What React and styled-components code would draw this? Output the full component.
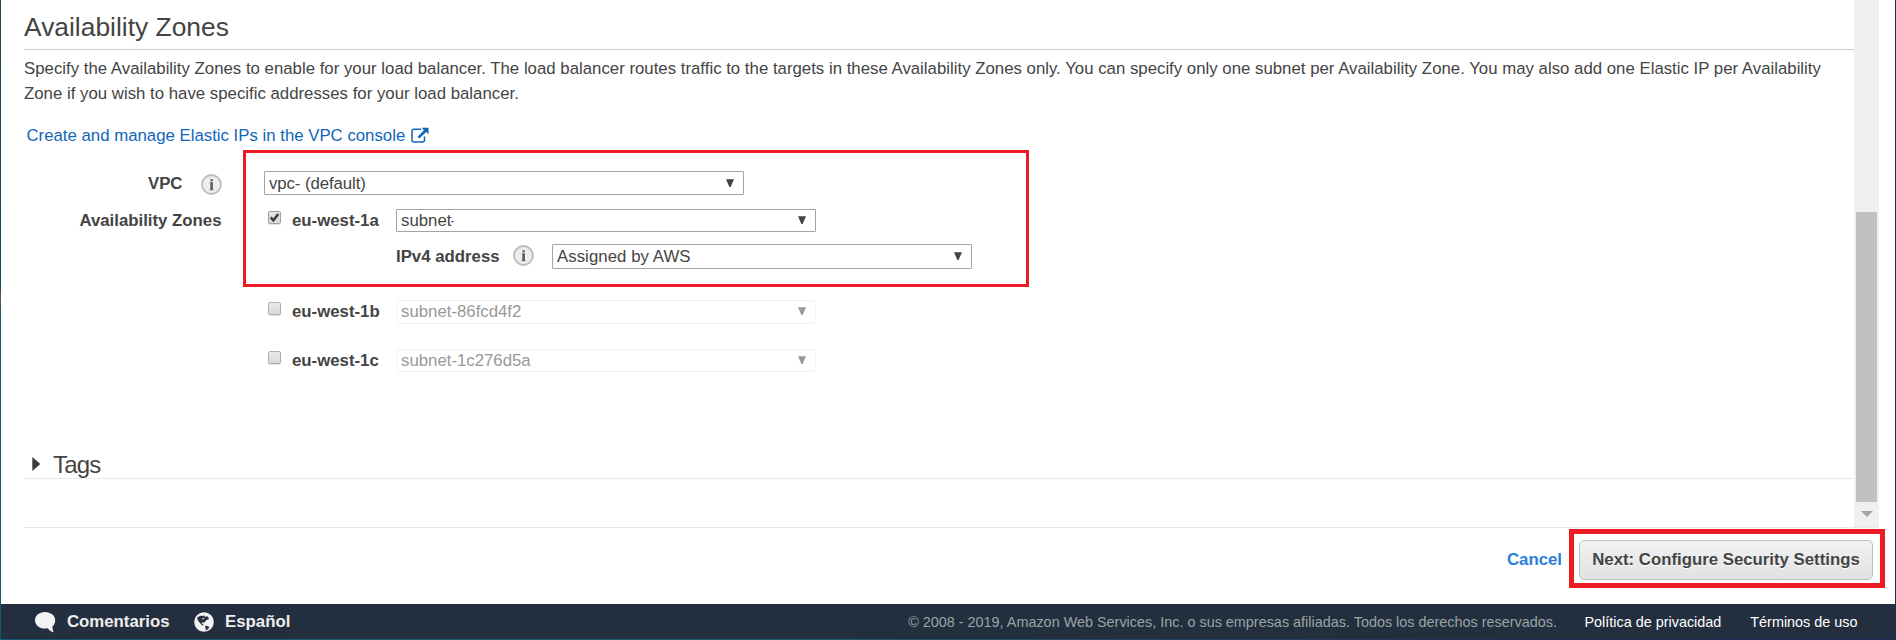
import React from "react";
import styled, { createGlobalStyle, css } from "styled-components";

const GlobalStyle = createGlobalStyle`
  * { box-sizing: border-box; }
  body {
    margin: 0;
    background: #fff;
    color: #444;
    font-family: "Liberation Sans", Arial, Helvetica, sans-serif;
    font-size: 16.8px;
    line-height: 19px;
  }
`;

const Page = styled.div`
  display: flex;
  height: 640px;
  overflow: hidden;
`;

const LeftEdge = styled.div`
  width: 1px;
  background: linear-gradient(#24485a, #1f4a60 45%, #5a5a5e 46%, #1b566f 50%, #17586f);
`;

const RightEdge = styled.div`
  width: 1px;
  background: #1e2b4f;
`;

const Window = styled.div`
  flex: 1;
  min-width: 0;
  display: flex;
  flex-direction: column;
`;

const Viewport = styled.div`
  display: flex;
  height: 527px;
  padding-right: 16px;
`;

const Content = styled.main`
  flex: 1;
  min-width: 0;
  padding-left: 23px;
`;

const Heading = styled.h2`
  margin: 0;
  padding: 12px 0 7px;
  border-bottom: 1px solid #ccc;
  font-size: 26.4px;
  font-weight: 400;
  line-height: 30px;
`;

const Description = styled.p`
  margin: 6px 0 0;
  line-height: 25px;
  letter-spacing: 0.007px;
`;

const ConsoleLink = styled.a`
  display: flex;
  align-items: flex-start;
  gap: 6px;
  height: 25px;
  margin-top: 17px;
  padding: 3px 0 0 2.5px;
  color: #1166bb;

  svg { margin-top: 1px; }
`;

const Form = styled.div`
  position: relative;
  height: 303px;
  padding-top: 23px;
`;

const Highlight = styled.div`
  position: absolute;
  top: 2px;
  left: 219px;
  width: 786px;
  height: 137px;
  border: 3px solid #ed1c24;
  pointer-events: none;
`;

const Row = styled.div`
  display: flex;
  align-items: flex-start;
  height: ${(p) => p.$height}px;
  margin-bottom: ${(p) => p.$gap || 0}px;
`;

const FieldLabel = styled.div`
  display: flex;
  justify-content: flex-end;
  width: 197.5px;
  font-weight: 700;
  gap: 18px;
`;

const LabelText = styled.span`
  padding-top: ${(p) => p.$top}px;
`;

const FieldBody = styled.div`
  display: flex;
  align-items: flex-start;
  margin-left: ${(p) => p.$indent}px;
`;

const Select = styled.div`
  display: flex;
  justify-content: space-between;
  align-items: flex-start;
  width: ${(p) => p.$width}px;
  height: ${(p) => p.$height}px;
  padding: ${(p) => p.$top - 1}px 9px 0 4px;
  border: 1px solid #a3a3a3;
  border-radius: 1px;
  background: #fff;
  ${(p) =>
    p.$disabled &&
    css`
      border-color: #f2f2f2;
      color: #999;
    `}
`;

const SelectValue = styled.span`
  white-space: nowrap;
  letter-spacing: ${(p) => p.$tracking || 0}px;
`;

const ShortDash = styled.span`
  display: inline-block;
  transform: scaleX(0.5);
  transform-origin: left center;
`;

const ArrowIcon = styled.svg`
  display: block;
  margin-top: 5px;
`;

const CheckBox = styled.span`
  display: block;
  width: 13px;
  height: 13px;
  margin-top: ${(p) => p.$top}px;
  border: 1px solid ${(p) => (p.$checked ? "#a0a0a0" : "#b0b0b0")};
  border-radius: 2px;
  background: linear-gradient(#e9e9e9, #dadada);
  box-shadow: 0 1px 1px rgba(0, 0, 0, 0.12);

  svg { display: block; }
`;

const ZoneName = styled.span`
  width: 104px;
  margin-left: 11px;
  padding-top: ${(p) => p.$top}px;
  font-weight: 700;
`;

const SubLabel = styled.span`
  width: 116.5px;
  padding-top: 3px;
  font-weight: 700;
`;

const InfoMark = styled.svg`
  display: block;
  flex: none;
  margin-top: ${(p) => p.$top}px;
`;

const TagsHeader = styled.div`
  display: flex;
  align-items: flex-start;
  gap: 13px;
  height: 28px;
  padding-left: 8px;
  border-bottom: 1px solid #e9e9e9;
  font-size: 24px;
  line-height: 27px;
  letter-spacing: -0.8px;

  svg { display: block; margin-top: 6px; }
`;

const ScrollTrack = styled.div`
  display: flex;
  flex-direction: column;
  align-items: center;
  width: 25px;
  padding-top: 212px;
  background: #f0f0f0;
`;

const ScrollThumb = styled.div`
  width: 21px;
  height: 290px;
  margin-bottom: 9px;
  background: #c1c1c1;
`;

const Actions = styled.div`
  display: flex;
  justify-content: flex-end;
  align-items: flex-start;
  gap: 17px;
  height: 77px;
  margin: 0 16px 0 23px;
  padding: 12px 6px 0 0;
  border-top: 1px solid #e9e9e9;
`;

const Cancel = styled.a`
  padding-top: 10px;
  color: #2a80d8;
  font-weight: 700;
`;

const NextButton = styled.button`
  position: relative;
  width: 294px;
  height: 40px;
  padding: 0 0 2px;
  border: 1px solid #c0c0c0;
  border-radius: 5px;
  background: linear-gradient(#f3f3f3, #e1e1e1);
  color: #444;
  font: 700 16.8px/19px "Liberation Sans", Arial, sans-serif;
  white-space: nowrap;
  text-shadow: 0 1px 0 #fff;

  &::after {
    content: "";
    position: absolute;
    inset: -12px -13px -9px -11px;
    border: 5px solid #ed1c24;
  }
`;

const Footer = styled.footer`
  display: flex;
  height: 35px;
  padding: 0 37.5px 0 34px;
  background: #232f3e;
  color: #eee;
  font-weight: 700;
  line-height: 35px;
`;

const FooterItem = styled.span`
  display: flex;
  align-items: flex-start;
  width: ${(p) => p.$width}px;
  gap: ${(p) => p.$gap}px;

  svg { display: block; margin-top: 8px; }
`;

const Legal = styled.div`
  display: flex;
  gap: 29px;
  margin-left: auto;
  font-size: 14.4px;
  font-weight: 400;
  line-height: 36px;
  white-space: nowrap;
`;

const Copyright = styled.span`
  margin-right: -1.5px;
  color: #99a5a6;
  letter-spacing: 0.005px;
`;

const LegalLink = styled.a`
  color: #fff;
`;

const BottomEdge = styled.div`
  height: 1px;
  background: linear-gradient(90deg, #17586f, #1d5f70 40%, #24335c 75%, #1e2f5c);
`;

const Arrow = () => (
  <ArrowIcon width="8" height="8" viewBox="0 0 8 8">
    <path d="M0 .2h8L4.6 8H3.4z" fill="currentColor" />
  </ArrowIcon>
);

const Info = ({ top }) => (
  <InfoMark $top={top} width="21" height="21" viewBox="0 0 21 21">
    <circle cx="10.5" cy="10.5" r="9.5" fill="#ededed" stroke="#bcbcbc" strokeWidth="1.8" />
    <path d="M8.3 8.2h3.7v7h1.100v1.300H8v-1.300h1.200V9.500h-.9z" fill="#bdbdbd" />
    <path d="M9.500 5.300h2.300v1.900H9.500zM9.500 8.300h2.300v7.700H9.500z" fill="#555" />
  </InfoMark>
);

const Check = () => (
  <svg width="11" height="11" viewBox="0 0 11 11">
    <path d="M1.700 5.400l2.700 2.900L9.300 2" fill="none" stroke="#3c3c3c" strokeWidth="2.500" />
  </svg>
);

const Zone = ({ name, subnet, height, checked }) => (
  <FieldBody $indent={checked ? 46.5 : 244}>
    <CheckBox $top={2} $checked={checked}>{checked && <Check />}</CheckBox>
    <ZoneName $top={2}>{name}</ZoneName>
    <Select $width={420} $height={height} $top={2} $disabled={!checked}>
      <SelectValue>{subnet}</SelectValue>
      <Arrow />
    </Select>
  </FieldBody>
);

export default function App() {
  return (
    <>
      <GlobalStyle />
      <Page>
        <LeftEdge />
        <Window>
          <Viewport>
            <Content>
              <Heading>Availability Zones</Heading>
              <Description>
                Specify the Availability Zones to enable for your load balancer. The load balancer routes traffic to the
                targets in these Availability Zones only. You can specify only one subnet per Availability Zone. You may
                also add one Elastic IP per Availability
                <br />
                Zone if you wish to have specific addresses for your load balancer.
              </Description>
              <ConsoleLink>
                Create and manage Elastic IPs in the VPC console
                <svg width="18" height="16" viewBox="0 0 18 16">
                  <path d="M10 2.300H3a2 2 0 0 0-2 2V13a2 2 0 0 0 2 2h8.500a2 2 0 0 0 2-2V9.500" fill="none" stroke="currentColor" strokeWidth="1.500" />
                  <path d="M10.500.8H17.500V7.200L15.200 5 8.300 11.400 6.600 9.800 13 3.200z" fill="currentColor" />
                </svg>
              </ConsoleLink>
              <Form>
                <Row $height={24} $gap={14}>
                  <FieldLabel>
                    <LabelText $top={3}>VPC</LabelText>
                    <Info top={3} />
                  </FieldLabel>
                  <FieldBody $indent={42.5}>
                    <Select $width={480} $height={24} $top={3}>
                      <SelectValue $tracking={-0.08}>vpc- (default)</SelectValue>
                      <Arrow />
                    </Select>
                  </FieldBody>
                </Row>
                <Row $height={23} $gap={12}>
                  <FieldLabel>
                    <LabelText $top={2}>Availability Zones</LabelText>
                  </FieldLabel>
                  <Zone name="eu-west-1a" subnet={<>subnet<ShortDash>-</ShortDash></>} height={23} checked />
                </Row>
                <Row $height={25} $gap={31}>
                  <FieldBody $indent={372}>
                    <SubLabel>IPv4 address</SubLabel>
                    <Info top={1} />
                  </FieldBody>
                  <FieldBody $indent={18.5}>
                    <Select $width={420} $height={25} $top={3}>
                      <SelectValue $tracking={0.05}>Assigned by AWS</SelectValue>
                      <Arrow />
                    </Select>
                  </FieldBody>
                </Row>
                <Row $height={24} $gap={25}>
                  <Zone name="eu-west-1b" subnet="subnet-86fcd4f2" height={24} />
                </Row>
                <Row $height={23}>
                  <Zone name="eu-west-1c" subnet="subnet-1c276d5a" height={23} />
                </Row>
                <Highlight />
              </Form>
              <TagsHeader>
                <svg width="8" height="14" viewBox="0 0 8 14">
                  <path d="M.3 0L7.800 6.500v1L.3 14z" fill="#3c3c3c" />
                </svg>
                Tags
              </TagsHeader>
            </Content>
            <ScrollTrack>
              <ScrollThumb />
              <svg width="12" height="6" viewBox="0 0 12 6">
                <path d="M0 0h12L6 6z" fill="#a3a3a3" />
              </svg>
            </ScrollTrack>
          </Viewport>
          <Actions>
            <Cancel>Cancel</Cancel>
            <NextButton>Next: Configure Security Settings</NextButton>
          </Actions>
          <Footer>
            <FooterItem $width={158.500} $gap={11}>
              <svg width="21" height="21" viewBox="0 0 21 21">
                <path d="M10 0C4.300 0 0 3.600 0 8.200c0 4.800 4.300 8.300 10 8.300 1 0 2-.1 2.900-.3 1.200 2 3.100 3.500 5.900 4-1-1.500-1.400-3.600-1.300-5.700 1.700-1.500 2.700-3.700 2.700-6.300C20.200 3.600 15.700 0 10 0z" fill="#f3f3f3" />
              </svg>
              Comentarios
            </FooterItem>
            <FooterItem $width={120} $gap={11.6}>
              <svg width="20" height="20" viewBox="0 0 20 20">
                <circle cx="10" cy="10" r="9.800" fill="#f3f3f3" />
                <path d="M3.800 5L6.500 3.800l2 .2 1.300-.8 1 1.600 2.400-.5 1 1.300 1 1-1 .8-1.800.5-1.300 1.900-1.400 1-1.500-.4-.7.700 1 1 .8.300.3 1.400-1.800-.7L5.500 10.500 4 8.500 3 6.500z" fill="#2a3340" />
                <path d="M11 14l1.800-.3 2.600 1.300-1.200 2-2.100 1.400-.7-2.400z" fill="#2a3340" />
                <path d="M8 6.600l1.700-.7.8.9-1.600.8z" fill="#f3f3f3" />
              </svg>
              Español
            </FooterItem>
            <Legal>
              <Copyright>
                © 2008 - 2019, Amazon Web Services, Inc. o sus empresas afiliadas. Todos los derechos reservados.
              </Copyright>
              <LegalLink>Política de privacidad</LegalLink>
              <LegalLink>Términos de uso</LegalLink>
            </Legal>
          </Footer>
          <BottomEdge />
        </Window>
        <RightEdge />
      </Page>
    </>
  );
}
